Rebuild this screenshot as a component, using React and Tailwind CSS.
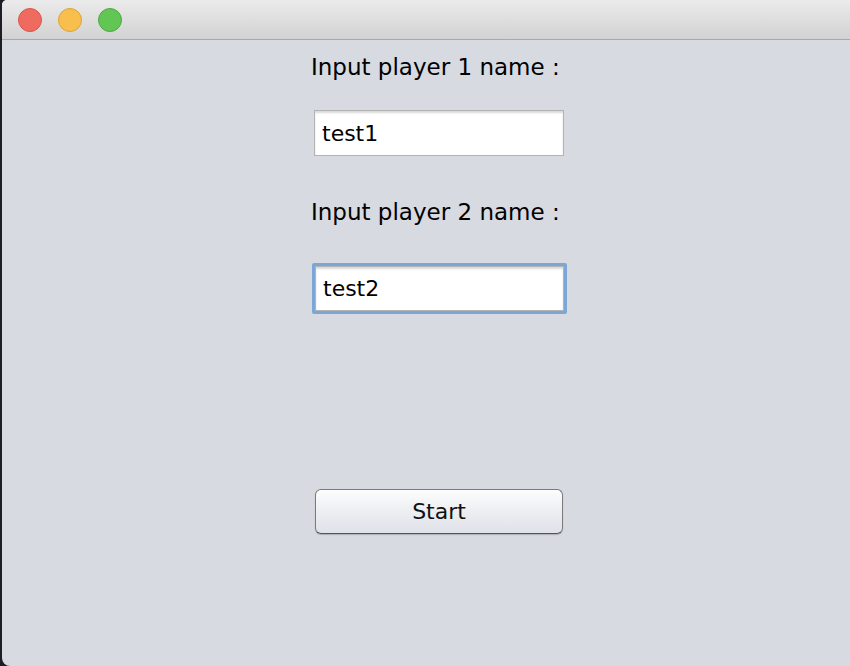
import React, { useState } from "react";

const App = () => {
  const [player1, setPlayer1] = useState("test1");
  const [player2, setPlayer2] = useState("test2");

  const font = { fontFamily: '"DejaVu Sans", "Lucida Grande", sans-serif' };

  return (
    <div className="w-[850px] h-[666px] bg-[#1b1e22] pl-[2px] overflow-hidden" style={font}>
      <div className="w-[848px] h-[666px] flex flex-col bg-[#d7dae1] rounded-tl-[5px] rounded-bl-[8px] overflow-hidden">
        {/* Title bar */}
        <div className="h-[40px] shrink-0 flex items-center gap-[16px] pl-[16px] bg-gradient-to-b from-[#ebebeb] to-[#d2d2d2] border-b border-[#a9a9a9]">
          <span className="w-[24px] h-[24px] rounded-full bg-[#ef6b5f] border border-[#d8564c]" />
          <span className="w-[24px] h-[24px] rounded-full bg-[#f9bf4c] border border-[#dea23a]" />
          <span className="w-[24px] h-[24px] rounded-full bg-[#62c655] border border-[#4ea844]" />
        </div>

        {/* Form */}
        <div className="flex flex-col items-start pl-[310px] text-black">
          <label className="mt-[13px] ml-[-1px] text-[23px] leading-[28px] whitespace-nowrap">
            Input player 1 name :
          </label>
          <div className="mt-[29px] ml-[2px] w-[250px] h-[46px] bg-white border border-[#b3b3b3] shadow-[inset_0_2px_2px_rgba(0,0,0,0.15)] flex items-center">
            <input
              value={player1}
              onChange={(e) => setPlayer1(e.target.value)}
              className="w-full px-[7px] text-[22px] bg-transparent outline-none"
              style={font}
            />
          </div>

          <label className="mt-[42px] ml-[-1px] text-[23px] leading-[28px] whitespace-nowrap">
            Input player 2 name :
          </label>
          <div className="mt-[37px] w-[255px] h-[51px] rounded-[2px] border-[3px] border-[#7ba7d6] bg-white flex items-center">
            <div className="w-full h-full border border-[#b3b3b3] shadow-[inset_0_2px_2px_rgba(0,0,0,0.15)] flex items-center">
              <input
                value={player2}
                onChange={(e) => setPlayer2(e.target.value)}
                className="w-full px-[7px] text-[22px] bg-transparent outline-none"
                style={font}
              />
            </div>
          </div>

          <button className="mt-[175px] ml-[3px] w-[248px] h-[45px] rounded-[6px] border border-[#7a7a7a] border-b-[#555555] bg-gradient-to-b from-[#fdfdfd] via-[#eceef1] to-[#dfe2ea] shadow-[0_1px_1px_rgba(0,0,0,0.2)] text-[22px] text-[#111]">
            Start
          </button>
        </div>
      </div>
    </div>
  );
};

export default App;
